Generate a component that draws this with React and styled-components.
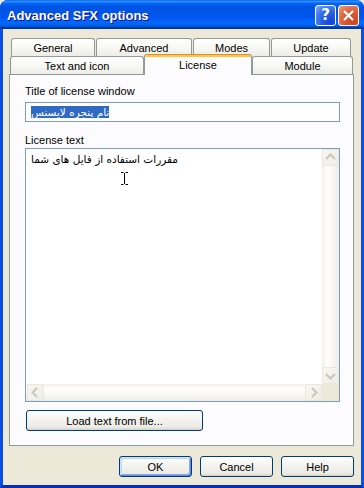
import React from 'react'
import styled, { createGlobalStyle } from 'styled-components'

const Global = createGlobalStyle`
  html, body { margin: 0; padding: 0; background: #ECE9D8; }
  body { font-family: "Liberation Sans", Arial, sans-serif; font-size: 11px; }
`

const Chevron = ({ dir }) => {
  const pts = {
    up: '4,10 8.5,5.5 13,10',
    down: '4,7 8.5,11.5 13,7',
    left: '10,4 5.5,8.5 10,13',
    right: '7,4 11.5,8.5 7,13',
  }[dir]
  return (
    <svg width="17" height="17" viewBox="0 0 17 17">
      <polyline points={pts} fill="none" stroke="#C9C7BA" strokeWidth="2" />
    </svg>
  )
}

function App() {
  return (
    <Window>
      <Global />
      <TitleBar>
        <TitleText>Advanced SFX options</TitleText>
        <CaptionButtons>
          <CaptionButton>?</CaptionButton>
          <CaptionButton $close>
            <svg width="13" height="13" viewBox="0 0 13 13">
              <path d="M2 2 L11 11 M11 2 L2 11" stroke="#fff" strokeWidth="2.2" />
            </svg>
          </CaptionButton>
        </CaptionButtons>
      </TitleBar>

      <Frame>
        <Client>
          <TabRow $indent={2}>
            <Tab $w={84}>General</Tab>
            <Tab $w={96}>Advanced</Tab>
            <Tab $w={77}>Modes</Tab>
            <Tab $w={80}>Update</Tab>
          </TabRow>
          <TabRow $indent={1} $gap={0}>
            <Tab $w={134}>Text and icon</Tab>
            <ActiveTab $w={108}>License</ActiveTab>
            <Tab $w={101}>Module</Tab>
          </TabRow>

          <Panel>
            <Label>Title of license window</Label>
            <TextInput>
              <Selected>نام پنجره لایسنس</Selected>
            </TextInput>

            <Label $top={12}>License text</Label>
            <Memo>
              <MemoText>
                <Rtl>مقررات استفاده از فایل های شما</Rtl>
                <Caret>
                  <svg width="7" height="13" viewBox="0 0 7 13">
                    <path d="M0 0.5 H2.5 M4.5 0.5 H7 M3.5 1 V12 M0 12.5 H2.5 M4.5 12.5 H7" stroke="#000" strokeWidth="1" fill="none" />
                  </svg>
                </Caret>
              </MemoText>
              <VScroll>
                <ScrollButton><Chevron dir="up" /></ScrollButton>
                <ScrollButton><Chevron dir="down" /></ScrollButton>
              </VScroll>
              <HScroll>
                <ScrollButton><Chevron dir="left" /></ScrollButton>
                <ScrollButton><Chevron dir="right" /></ScrollButton>
              </HScroll>
              <Corner />
            </Memo>

            <XPButton $w={177}>Load text from file...</XPButton>
          </Panel>

          <Footer>
            <XPButton $w={73} $default>OK</XPButton>
            <XPButton $w={73}>Cancel</XPButton>
            <XPButton $w={73}>Help</XPButton>
          </Footer>
        </Client>
      </Frame>
    </Window>
  )
}

export default App

const Window = styled.div`
  width: 364px;
  height: 488px;
  display: flex;
  flex-direction: column;
  background: #0842D5;
  border-radius: 8px 8px 0 0;
  overflow: hidden;
`

const TitleBar = styled.div`
  height: 29px;
  flex-shrink: 0;
  display: flex;
  align-items: center;
  justify-content: space-between;
  padding: 0 5px 0 7px;
  background: linear-gradient(180deg, #0058EE 0%, #3A93FF 4%, #288EFF 6%, #127DFF 8%,
    #036FFC 10%, #0262EE 14%, #0057E5 20%, #0054E3 24%, #0055EB 56%, #005BF5 66%,
    #026AFE 76%, #0062EF 86%, #0052D6 92%, #0040AB 94%, #003092 100%);
`

const TitleText = styled.div`
  color: #fff;
  font-family: "Liberation Sans", Arial, sans-serif;
  font-weight: bold;
  font-size: 13px;
  text-shadow: 1px 1px #0F1089;
  margin-top: 1px;
`

const CaptionButtons = styled.div`
  display: flex;
  gap: 2px;
  margin-top: 1px;
`

const CaptionButton = styled.div`
  width: 21px;
  height: 21px;
  box-sizing: border-box;
  border: 1px solid #fff;
  border-radius: 3px;
  display: flex;
  align-items: center;
  justify-content: center;
  color: #fff;
  font-family: "DejaVu Sans", sans-serif;
  font-weight: bold;
  font-size: 15px;
  background: ${p => p.$close
    ? 'radial-gradient(circle at 80% 85%, #CC4620 0%, #DA5A34 45%, #E47A56 75%, #F0A78C 100%)'
    : 'radial-gradient(circle at 80% 85%, #1043D8 0%, #2763E4 45%, #4F84EE 75%, #8CB0F5 100%)'};
`

const Frame = styled.div`
  flex: 1;
  display: flex;
  border-left: 3px solid #0B4EE3;
  border-right: 3px solid #0B4EE3;
  border-bottom: 3px solid #0630B8;
`

const Client = styled.div`
  flex: 1;
  display: flex;
  flex-direction: column;
  background: #ECE9D8;
  padding: 9px 7px 8px 6px;
`

const TabRow = styled.div`
  display: flex;
  gap: ${p => (p.$gap ?? 1)}px;
  padding-left: ${p => p.$indent}px;
  height: 18px;
`

const Tab = styled.div`
  width: ${p => p.$w}px;
  box-sizing: border-box;
  height: 19px;
  border: 1px solid #919B9C;
  border-bottom: none;
  border-radius: 3px 3px 0 0;
  background: linear-gradient(180deg, #FFFFFF 0%, #F7F7F3 50%, #ECEBE6 100%);
  display: flex;
  justify-content: center;
  padding-top: 3px;
  color: #000;
`

const ActiveTab = styled(Tab)`
  height: 21px;
  margin-top: -2px;
  position: relative;
  z-index: 1;
  border: none;
  border-left: 1px solid #919B9C;
  border-right: 1px solid #919B9C;
  padding-top: 5px;
  background: linear-gradient(180deg, #E68B2C 0px, #E68B2C 1px, #FFC73C 1px, #FFC83C 3px, #FCFCFE 3px);
`

const Panel = styled.div`
  height: 372px;
  width: 345px;
  box-sizing: border-box;
  border: 1px solid #919B9C;
  background: #FCFCFE;
  padding: 10px 0 0 15px;
  display: flex;
  flex-direction: column;
  align-items: flex-start;
`

const Label = styled.div`
  line-height: 13px;
  margin-top: ${p => p.$top || 0}px;
  color: #000;
`

const TextInput = styled.div`
  margin-top: 4px;
  width: 315px;
  height: 20px;
  box-sizing: border-box;
  border: 1px solid #7F9DB9;
  background: #fff;
  display: flex;
  align-items: center;
  padding-left: 5px;
`

const Selected = styled.span`
  direction: rtl;
  unicode-bidi: isolate;
  font-family: "DejaVu Sans", sans-serif;
  font-size: 10.5px;
  line-height: 12px;
  background: #316AC5;
  color: #fff;
`

const Memo = styled.div`
  margin-top: 1px;
  width: 315px;
  height: 254px;
  box-sizing: border-box;
  border: 1px solid #7F9DB9;
  background: #fff;
  display: grid;
  grid-template-columns: 1fr 17px;
  grid-template-rows: 1fr 17px;
`

const MemoText = styled.div`
  position: relative;
  padding: 4px 0 0 5px;
`

const Rtl = styled.span`
  direction: rtl;
  unicode-bidi: isolate;
  font-family: "DejaVu Sans", sans-serif;
  font-size: 10.5px;
  color: #000;
`

const Caret = styled.div`
  position: absolute;
  left: 95px;
  top: 23px;
  line-height: 0;
`

const VScroll = styled.div`
  display: flex;
  flex-direction: column;
  justify-content: space-between;
  background: linear-gradient(90deg, #F3F1EC 0%, #FEFEFB 30%, #F3F1EC 85%, #EEEDE5 100%);
`

const HScroll = styled.div`
  display: flex;
  justify-content: space-between;
  padding-left: 1px;
  background: linear-gradient(180deg, #F3F1EC 0%, #FEFEFB 30%, #F3F1EC 85%, #EEEDE5 100%);
`

const ScrollButton = styled.div`
  width: 17px;
  height: 17px;
  box-sizing: border-box;
  border: 1px solid #E8E8DF;
  border-radius: 2px;
  background: linear-gradient(135deg, #F7F7F3 0%, #EEEDE5 100%);
  display: flex;
  align-items: center;
  justify-content: center;
  & > svg { margin: -1px; }
`

const Corner = styled.div`
  background: #ECE9D8;
`

const XPButton = styled.div`
  width: ${p => p.$w}px;
  height: 21px;
  box-sizing: border-box;
  border: 1px solid #003C74;
  border-radius: 3px;
  background: linear-gradient(180deg, #FFFFFF 0%, #F4F4F0 40%, #ECEBE6 85%, #D6D0C5 100%);
  box-shadow: ${p => p.$default
    ? 'inset 1px 1px #CEE7FF, inset -1px -1px #6982EE, inset 2px 2px #BCD4F6, inset -2px -2px #89ADE4'
    : 'none'};
  display: flex;
  align-items: center;
  justify-content: center;
  color: #000;
  flex-shrink: 0;
  ${Panel} & { margin-top: 8px; margin-left: 1px; }
`

const Footer = styled.div`
  display: flex;
  justify-content: flex-end;
  gap: 8px;
  margin-top: 10px;
`
